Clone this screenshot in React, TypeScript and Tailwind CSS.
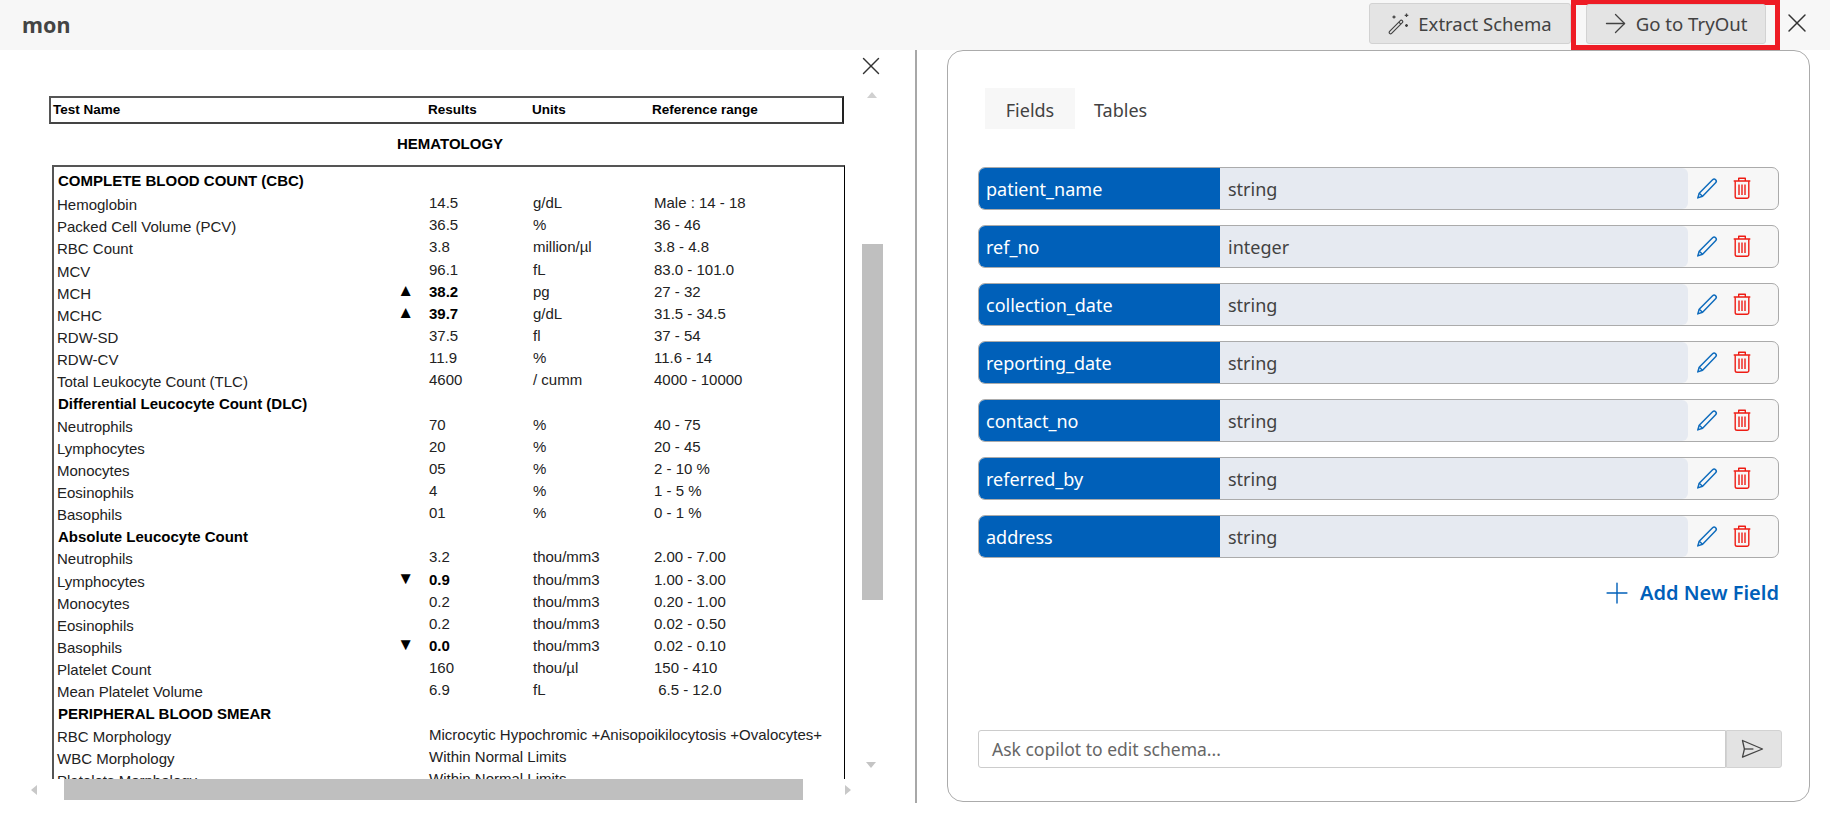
import React from "react";
import { X, ArrowRight, Plus } from "lucide-react";

type R = { n: string; v?: string; u?: string; r?: string; h?: boolean; a?: string; b?: boolean };
const rows: R[] = [
  { n: "COMPLETE BLOOD COUNT (CBC)", h: true },
  { n: "Hemoglobin", v: "14.5", u: "g/dL", r: "Male : 14 - 18" },
  { n: "Packed Cell Volume (PCV)", v: "36.5", u: "%", r: "36 - 46" },
  { n: "RBC Count", v: "3.8", u: "million/µl", r: "3.8 - 4.8" },
  { n: "MCV", v: "96.1", u: "fL", r: "83.0 - 101.0" },
  { n: "MCH", v: "38.2", u: "pg", r: "27 - 32", a: "▲", b: true },
  { n: "MCHC", v: "39.7", u: "g/dL", r: "31.5 - 34.5", a: "▲", b: true },
  { n: "RDW-SD", v: "37.5", u: "fl", r: "37 - 54" },
  { n: "RDW-CV", v: "11.9", u: "%", r: "11.6 - 14" },
  { n: "Total Leukocyte Count (TLC)", v: "4600", u: "/ cumm", r: "4000 - 10000" },
  { n: "Differential Leucocyte Count (DLC)", h: true },
  { n: "Neutrophils", v: "70", u: "%", r: "40 - 75" },
  { n: "Lymphocytes", v: "20", u: "%", r: "20 - 45" },
  { n: "Monocytes", v: "05", u: "%", r: "2 - 10 %" },
  { n: "Eosinophils", v: "4", u: "%", r: "1 - 5 %" },
  { n: "Basophils", v: "01", u: "%", r: "0 - 1 %" },
  { n: "Absolute Leucocyte Count", h: true },
  { n: "Neutrophils", v: "3.2", u: "thou/mm3", r: "2.00 - 7.00" },
  { n: "Lymphocytes", v: "0.9", u: "thou/mm3", r: "1.00 - 3.00", a: "▼", b: true },
  { n: "Monocytes", v: "0.2", u: "thou/mm3", r: "0.20 - 1.00" },
  { n: "Eosinophils", v: "0.2", u: "thou/mm3", r: "0.02 - 0.50" },
  { n: "Basophils", v: "0.0", u: "thou/mm3", r: "0.02 - 0.10", a: "▼", b: true },
  { n: "Platelet Count", v: "160", u: "thou/µl", r: "150 - 410" },
  { n: "Mean Platelet Volume", v: "6.9", u: "fL", r: "\u00a06.5 - 12.0" },
  { n: "PERIPHERAL BLOOD SMEAR", h: true },
];
const wide: [string, string][] = [
  ["RBC Morphology", "Microcytic Hypochromic +Anisopoikilocytosis +Ovalocytes+"],
  ["WBC Morphology", "Within Normal Limits"],
  ["Platelets Morphology", "Within Normal Limits"],
];
const fields: [string, string][] = [
  ["patient_name", "string"],
  ["ref_no", "integer"],
  ["collection_date", "string"],
  ["reporting_date", "string"],
  ["contact_no", "string"],
  ["referred_by", "string"],
  ["address", "string"],
];

function Wand() {
  return (
    <svg width="24" height="24" viewBox="0 0 24 24" fill="none" stroke="#444" strokeWidth="1.2" strokeLinejoin="round">
      <path d="M2.6 19.4 13.6 8.4a1.5 1.5 0 0 1 2 2L4.6 21.4a1.4 1.4 0 0 1-2-2Z" />
      <path d="M11.8 10.2l2 2" />
      <path d="M7 3.5v3M5.5 5h3M19.5 1.5v3.6M17.7 3.3h3.6M19.5 12v3M18 13.5h3" strokeWidth="1.3" />
    </svg>
  );
}
function PencilIcon() {
  return (
    <svg width="24" height="24" viewBox="0 0 24 24" fill="none" stroke="#0f6cbd" strokeWidth="1.5" strokeLinejoin="round">
      <path d="M17.6 2.8a2.1 2.1 0 0 1 3 3L7.6 19.2l-4.8 1.7 1.4-4.7Z" />
      <path d="M4.2 16.2l3.4 3" />
    </svg>
  );
}
function TrashIcon() {
  return (
    <svg width="18" height="22" viewBox="0 0 18 22" fill="none" stroke="#ee1c14" strokeWidth="1.4" strokeLinejoin="round" className="-translate-y-px">
      <path d="M.7 4h16.6M5.7 3.6V1.2h6.6v2.4" />
      <path d="M2.2 4.2v15.2a1.8 1.8 0 0 0 1.8 1.8h10a1.8 1.8 0 0 0 1.8-1.8V4.2" />
      <path d="M6 7.5V18M9 7.5V18M12 7.5V18" />
    </svg>
  );
}
function SendIcon() {
  return (
    <svg width="24" height="22" viewBox="0 0 24 22" fill="none" stroke="#444" strokeWidth="1.3" strokeLinejoin="round">
      <path d="M2.5 2.5 22.5 11 2.5 19.2 4.4 11Z" />
      <path d="M4.4 11h9" />
    </svg>
  );
}

function Row({ row, first }: { row: R; first: boolean }) {
  if (row.h) {
    return (
      <div className={first ? "h-[22.15px] -translate-y-[2px] pl-[1px] font-bold text-black whitespace-nowrap leading-[21px]" : "h-[22.15px] pl-[1px] font-bold text-black whitespace-nowrap leading-[21px]"}>
        {row.n}
      </div>
    );
  }
  return (
    <div className="grid h-[22.15px] grid-cols-[372px_104px_121px_1fr] leading-[22px] text-[#222] whitespace-nowrap">
      <div className="flex justify-between pr-[15px]">
        <span>{row.n}</span>
        {row.a && <span className="-translate-y-[2px] text-[17px] text-black leading-[19px]">{row.a}</span>}
      </div>
      <div className={row.b ? "font-bold text-black -translate-y-[2px]" : "-translate-y-[2px]"}>{row.v}</div>
      <div className="-translate-y-[2px]">{row.u}</div>
      <div className="-translate-y-[2px]">{row.r}</div>
    </div>
  );
}

export default function App() {
  return (
    <div className="h-[818px] w-[1830px] overflow-hidden bg-white text-[18px] text-[#424242] font-['Noto_Sans','Open_Sans',sans-serif]">
      <header className="flex h-[50px] items-center bg-[#f7f7f7]">
        <h1 className="ml-[22px] flex-1 text-[21.5px] font-bold text-[#444]">mon</h1>
        <button className="mb-[3px] flex h-[41px] w-[202px] items-center justify-center gap-[7px] rounded-[3px] border border-[#d2d2d2] bg-[#e4e4e4] pr-[1px] text-[18.5px]">
          <Wand />
          Extract Schema
        </button>
        <div className="flex h-[50px] w-[209px] items-center justify-center border-[5px] border-[#ee1c25]">
          <button className="mt-[-3px] flex h-[40px] w-[180px] items-center justify-center gap-[5px] rounded-[3px] border border-[#d2d2d2] bg-[#e4e4e4] pr-[4px] text-[18.6px]">
            <ArrowRight size={31} strokeWidth={1} />
            Go to TryOut
          </button>
        </div>
        <X size={32} strokeWidth={1.1} className="ml-[1px] mr-[17px] text-[#333] -translate-y-[2px]" />
      </header>

      <main className="flex h-[752px]">
        <section className="flex h-[753px] w-[917px] shrink-0 flex-col border-r-2 border-[#a8a8a8]">
          <div className="flex h-[729px]">
            <div className="w-[860px] shrink-0 overflow-hidden pl-[49px] pt-[46px] font-['Liberation_Sans',Arial,sans-serif] text-[15px]">
              <div className="grid h-[28px] w-[795px] grid-cols-[375px_104px_120px_1fr] items-center border-2 border-[#555] pl-[2px] text-[13.5px] font-bold text-black border-r-[#222] border-b-[#444]">
                <span>Test Name</span>
                <span>Results</span>
                <span>Units</span>
                <span>Reference range</span>
              </div>
              <div className="flex h-[40px] w-[795px] items-center pl-[348px] font-bold text-black">HEMATOLOGY</div>
              <div className="ml-[3px] mt-[1px] h-[620px] w-[793px] border-l-2 border-t-2 border-r border-[#555] border-r-black pl-[3px] pt-[5px]">
                {rows.map((r, i) => (
                  <Row key={i} row={r} first={i === 0} />
                ))}
                {wide.map(([n, v]) => (
                  <div key={n} className="grid h-[22.15px] grid-cols-[372px_1fr] leading-[22px] text-[#222] whitespace-nowrap">
                    <span>{n}</span>
                    <span className="-translate-y-[2px]">{v}</span>
                  </div>
                ))}
              </div>
            </div>
            <div className="flex w-[56px] flex-col">
              <X size={30} strokeWidth={1.1} className="ml-[-4px] mt-[1px] shrink-0 text-[#333]" />
              <div className="ml-[7px] mt-[11px] h-0 w-0 shrink-0 border-x-[5.5px] border-b-[6px] border-x-transparent border-b-[#d0d0d0]" />
              <div className="ml-[2px] mt-[146px] h-[356px] w-[21px] shrink-0 bg-[#bfbfbf]" />
              <div className="ml-[6px] mt-[162px] h-0 w-0 shrink-0 border-x-[5.5px] border-t-[6px] border-x-transparent border-t-[#c4c4c4]" />
            </div>
          </div>
          <div className="flex h-[21px] items-center">
            <div className="ml-[31px] h-0 w-0 border-y-[5.5px] border-r-[6px] border-y-transparent border-r-[#c8c8c8]" />
            <div className="ml-[27px] h-[21px] w-[739px] bg-[#bfbfbf]" />
            <div className="ml-[42px] h-0 w-0 border-y-[5.5px] border-l-[6px] border-y-transparent border-l-[#c8c8c8]" />
          </div>
        </section>

        <section className="ml-[30px] flex h-[752px] w-[863px] flex-col rounded-[16px] border border-[#ababab] pl-[30px] pr-[30px]">
          <div className="ml-[7px] mt-[37px] flex h-[41px] items-stretch">
            <div className="flex w-[90px] items-center justify-center bg-[#f7f7f7] pt-[3px]">Fields</div>
            <div className="ml-[19px] flex items-center pt-[3px]">Tables</div>
          </div>
          <div className="mt-[38px] flex flex-col gap-[15px]">
            {fields.map(([n, t]) => (
              <div key={n} className="flex h-[43px] items-stretch overflow-hidden rounded-[7px] border border-[#ababab] bg-[#f7f7f7]">
                <div className="flex w-[241px] items-center bg-[#0060b9] pl-[7px] pt-[1px] text-white">{n}</div>
                <div className="flex w-[468px] items-center rounded-r-[6px] bg-[#e6eaf1] pl-[8px] pt-[1px]">{t}</div>
                <div className="ml-[7px] flex items-center gap-[14px]">
                  <PencilIcon />
                  <TrashIcon />
                </div>
              </div>
            ))}
          </div>
          <div className="mt-[18px] flex items-center justify-end">
            <Plus size={34} strokeWidth={1} className="text-[#0060b9]" />
            <span className="ml-[6px] text-[20px] font-semibold text-[#0060b9]">Add New Field</span>
          </div>
          <div className="mt-[120px] flex h-[38px] w-[804px] shrink-0">
            <div className="flex w-[748px] items-center rounded-l-[3px] border border-[#ccc] pl-[13px] text-[17.5px] text-[#666]">Ask copilot to edit schema...</div>
            <button className="flex w-[56px] items-center justify-center rounded-r-[3px] border border-[#d2d2d2] bg-[#e3e3e3] pr-[4px]">
              <SendIcon />
            </button>
          </div>
        </section>
      </main>
    </div>
  );
}
